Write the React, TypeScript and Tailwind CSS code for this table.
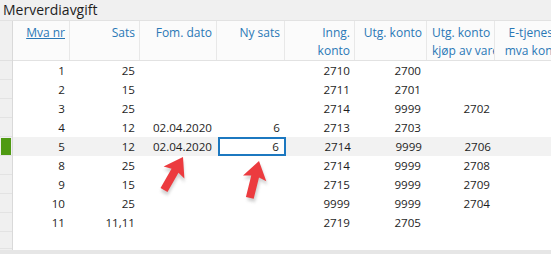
import React from 'react'

const cols = [
  { key: 'nr', w: 'w-[57px]' },
  { key: 'sats', w: 'w-[70px]' },
  { key: 'fom', w: 'w-[77px]' },
  { key: 'ny', w: 'w-[68px]' },
  { key: 'inng', w: 'w-[70px]' },
  { key: 'utg', w: 'w-[72px]' },
  { key: 'kjop', w: 'w-[68px]' },
  { key: 'etj', w: 'w-[74px]' },
]

const rows = [
  ['1', '25', '', '', '2710', '2700', '', ''],
  ['2', '15', '', '', '2711', '2701', '', ''],
  ['3', '25', '', '', '2714', '9999', '2702', ''],
  ['4', '12', '02.04.2020', '6', '2713', '2703', '', ''],
  ['5', '12', '02.04.2020', '6', '2714', '9999', '2706', ''],
  ['8', '25', '', '', '2714', '9999', '2708', ''],
  ['9', '15', '', '', '2715', '9999', '2709', ''],
  ['10', '25', '', '', '9999', '9999', '2704', ''],
  ['11', '11,11', '', '', '2719', '2705', '', ''],
]

const headers: string[][] = [
  ['Mva nr'],
  ['Sats'],
  ['Fom. dato'],
  ['Ny sats'],
  ['Inng.', 'konto'],
  ['Utg. konto'],
  ['Utg. konto', 'kjøp av vare'],
  ['E-tjeneste', 'mva konto'],
]

function Arrow({ x, y, angle }: { x: number; y: number; angle: number }) {
  // tip at (x, y), pointing up rotated by angle
  return (
    <g transform={`translate(${x} ${y}) rotate(${angle})`}>
      <polygon
        points="0,0 12,18 4,16 4,38 -4,38 -4,16 -12,18"
        fill="#9a9a9a"
        opacity="0.45"
        transform="translate(2 3)"
        filter="url(#blur)"
      />
      <polygon points="0,0 12,18 4,16 4,38 -4,38 -4,16 -12,18" fill="#ec3b3f" />
    </g>
  )
}

export default function App() {
  return (
    <div
      className="relative h-[254px] w-[551px] overflow-hidden bg-white text-[#1e1e1e]"
      style={{ fontFamily: '"Open Sans", "Noto Sans", sans-serif' }}
    >
      <div className="h-[21px] border-b border-[#e2e2e2] bg-[#f0f0f0] pl-[3px] text-[14px] leading-[20px]">
        Merverdiavgift
      </div>

      <div className="flex h-[229px]">
        {/* row header strip */ }
        <div className="w-[13px] shrink-0 border-r border-[#d9d9d9] bg-[#f0f0f0]">
          <div className="h-[40px] border-b border-[#e0e0e0]" />
          { rows.map((r, i) => (
            <div key={ i } className="flex h-[19px] items-center border-b border-[#e3e3e3]">
              { i === 4 && <div className="ml-px h-[17px] w-[10px] bg-[#4f9a12]" /> }
            </div>
          )) }
          <div className="h-[17px] border-b border-[#e3e3e3]" />
        </div>

        <div className="flex-1 text-[11.6px]">
          {/* header */ }
          <div className="flex h-[40px] border-b border-[#e2e2e2] bg-[#fbfbfb] text-[12px] text-[#2a78b6]">
            { headers.map((h, i) => (
              <div
                key={ i }
                className={ `${cols[i].w} shrink-0 overflow-hidden border-r border-[#e8e8e8] pl-[5px] pr-[4px] pt-[3px] text-right leading-[18px]` }
              >
                { h.map((line, j) => (
                  <div key={ j } className={ `whitespace-nowrap ${i === 0 ? 'underline' : ''}` }>
                    { line }
                  </div>
                )) }
              </div>
            )) }
          </div>

          {/* body */ }
          { rows.map((r, i) => (
            <div key={ i } className={ `flex h-[19px] leading-[19px] ${i === 4 ? 'bg-[#f2f2f2]' : ''}` }>
              { r.map((v, j) => (
                <div
                  key={ j }
                  className={ `${cols[j].w} shrink-0 pr-[5px] text-right ${j === 3 && i === 4 ? 'ml-px border-2 border-[#1c78c0] bg-white pr-[1px] leading-[15px]' : ''} ${j === 3 && i !== 4 ? 'pr-[3px]' : ''} ${j === 5 ? 'pr-[6px]' : ''} ${j === 4 || j === 6 ? 'pr-[4px]' : ''}` }
                >
                  { v }
                </div>
              )) }
            </div>
          )) }
        </div>
      </div>

      <div className="h-[4px] bg-[#e6e6e6]" />

      <svg className="pointer-events-none absolute left-0 top-0" width="551" height="254">
        <defs>
          <filter id="blur">
            <feGaussianBlur stdDeviation="1.5" />
          </filter>
        </defs>
        <Arrow x={ 183 } y={ 157 } angle={ 30 } />
        <Arrow x={ 259 } y={ 161 } angle={ 14 } />
      </svg>
    </div>
  )
}
